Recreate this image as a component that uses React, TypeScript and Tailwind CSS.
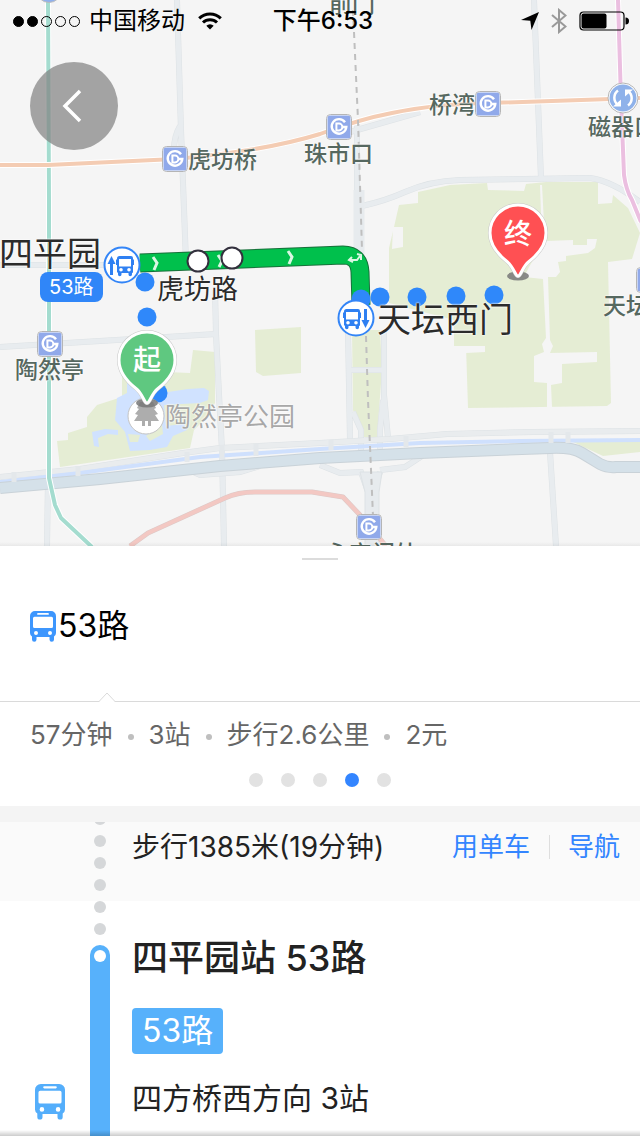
import clsx from "clsx";

const subwayStations = [
  { x: 175, y: 159 },
  { x: 339, y: 127 },
  { x: 488, y: 104 },
  { x: 50, y: 344 },
  { x: 369, y: 527 },
  { x: 649, y: 280 },
];

const walkDots = [
  [145, 282],
  [147, 317],
  [158, 393],
  [361, 299],
  [380, 297],
  [417, 297],
  [456, 296],
  [494, 295],
];

const stationLabels = [
  { name: "前门", place: "left-[329px] -top-[8px]" },
  { name: "桥湾", place: "left-[429px] top-[93px]" },
  { name: "磁器口", place: "left-[588px] top-[115px]" },
  { name: "珠市口", place: "left-[304px] top-[142px]" },
  { name: "虎坊桥", place: "left-[188px] top-[148px]" },
  { name: "天坛东门", place: "left-[603px] top-[294px]" },
  { name: "陶然亭", place: "left-[15px] top-[358px]" },
  { name: "永定门外", place: "left-[326px] top-[542px]" },
];

const summary = ["57分钟", "3站", "步行2.6公里", "2元"];

const pages = [0, 1, 2, 3, 4];

function BusIcon({ className }: { className?: string }) {
  return (
    <svg viewBox="0 0 26 31" className={className} fill="currentColor">
      <path
        fillRule="evenodd"
        d="M5 0h16a5 5 0 0 1 5 5v17a4 4 0 0 1-2 3.500v3a2 2 0 0 1-4.500 0v-2.500h-13v2.500a2 2 0 0 1-4.500 0v-3A4 4 0 0 1 0 22V5a5 5 0 0 1 5-5ZM8 2a.9.9 0 0 0 0 1.800h10a.9.9 0 0 0 0-1.800ZM4.500 5.800A1.500 1.500 0 0 0 3 7.300v8.200A1.500 1.500 0 0 0 4.500 17h17a1.500 1.500 0 0 0 1.500-1.500V7.300a1.500 1.500 0 0 0-1.500-1.500ZM6 20a2 2 0 1 0 0 4 2 2 0 1 0 0-4ZM20 20a2 2 0 1 0 0 4 2 2 0 1 0 0-4Z"
      />
    </svg>
  );
}

function SubwayMark({ x, y }: { x: number; y: number }) {
  return (
    <g transform={`translate(${x} ${y})`}>
      <rect x="-12.500" y="-12.500" width="25" height="25" rx="4" fill="#fff" stroke="#b5b5b5" />
      <rect x="-11.500" y="-11.500" width="23" height="23" rx="2.500" fill="#90a9ea" />
      <g fill="none" stroke="#fff" strokeWidth="2.400">
        <path d="M6-4.800A7.300 7.300 0 1 0 7.300 0H3" />
        <path d="M-2.600-3.400H0a3.400 3.400 0 0 1 0 6.800h-2.600Z" strokeWidth="2" />
      </g>
    </g>
  );
}

function Pin({ x, y, color }: { x: number; y: number; color: string }) {
  return (
    <g transform={`translate(${x} ${y})`}>
      <ellipse cx="0" cy="43" rx="11" ry="4.500" fill="#777" fillOpacity=".85" />
      <path
        d="M0 43C-3 43-4 34-11 28.500C-18 23-28 14-28 0A28 28 0 0 1 28 0C28 14 18 23 11 28.500C4 34 3 43 0 43Z"
        fill={color}
        stroke="#c8c8c8"
        strokeWidth="4"
      />
      <path
        d="M0 43C-3 43-4 34-11 28.500C-18 23-28 14-28 0A28 28 0 0 1 28 0C28 14 18 23 11 28.500C4 34 3 43 0 43Z"
        fill={color}
        stroke="#fff"
        strokeWidth="3"
      />
    </g>
  );
}

function StopMark({ x, y, boarding }: { x: number; y: number; boarding: boolean }) {
  return (
    <g transform={`translate(${x} ${y})`}>
      <circle r="17.500" fill="#fff" stroke="#3385f7" strokeWidth="2" />
      <g transform={boarding ? "translate(-5 -9)" : "translate(-12 -9)"} fill="#2f80f2">
        <path
          fillRule="evenodd"
          d="M2.500 0h11.500A2 2 0 0 1 16 2V3.500h1V9h-1V16.500L15 17v1.500a1 1 0 0 1-3.500 0V17h-7v1.500a1 1 0 0 1-3.500 0V17L0 16V9h-1V3.500h1V2.500A2.500 2.500 0 0 1 2.500 0ZM2 3V10.500h12V3ZM4 12a1.800 1.800 0 1 0 0 3.600 1.800 1.800 0 1 0 0-3.600ZM12 12a1.800 1.800 0 1 0 0 3.600 1.800 1.800 0 1 0 0-3.600Z"
        />
      </g>
      <path
        d={boarding ? "M-10.500-9l4 8h-2.500V10h-3V-1h-2.500Z" : "M9.500 10l-4-8h2.500V-9h3V2h2.500Z"}
        fill="#2f80f2"
      />
    </g>
  );
}

function MapCanvas() {
  return (
    <svg viewBox="0 0 640 546" preserveAspectRatio="xMinYMin slice" className="h-full w-full">
      <rect width="640" height="546" fill="#f5f5f5" />

      {/* parks */}
      <g fill="#e5edd4">
        <path d="M418 192L450 185L487 183L488 190L524 191L526 184L546 182H598V204L612 203L613 195L628 208L640 233L632 259L608 262L611 403L607 406L468 408L466 346H454V320L389 303V248L394 227L399 205L418 203Z" />
        <path d="M255 330L301 327V373L263 376L256 372Z" />
        <path d="M193 350L215 352V403L206 418L194 430L190 448L60 467L57 441L68 440V433L87 427V417L97 405L122 397V370L190 373Z" />
        <path d="M352 330H380L382 370L377 437H363L353 410Z" />
        <path d="M573 442H640V452L603 456Z" />
      </g>
      <g fill="#f5f5f5">
        <path d="M393 227H403V247L392 249Z" />
        <path d="M453 346H485V352L466 353V360H453Z" />
        <path d="M546 241L573 240V245H587V239H597L595 248L588 253L566 256V261L558 262L560 272L556 277H548L550 340L553 346L550 353L597 352V362L562 364V383L551 385L552 407H547V383L534 382V356L544 352L542 344L546 338L543 279L524 277L529 267L535 257Z" />
        <path d="M540 185L542 242L545 242L542 185Z" />
      </g>

      {/* lake */}
      <path
        fill="#d0e2ff"
        d="M127 380L127 393L117 398L115 420L125 432L130 451L150 450L167 447L173 436L187 430L184 424L166 426L164 405L200 403L208 400L209 391L204 388L188 389L168 392L150 388ZM92 432L105 429L118 430V435L108 434L98 438L99 447L94 446Z"
      />
      <path fill="#e5edd4" d="M128 434L140 435L138 442H130ZM146 436L162 424L163 434L150 441Z" />

      {/* roads */}
      <g fill="none" stroke="#dde2e5" strokeWidth="6" strokeLinejoin="round">
        <path d="M177 0L181 130L186 262M180 126Q174 136 174 150" />
        <path d="M215 290L216 334L219 395L222 450L224 546M0 347L216 334M0 265H110" />
        <path d="M534 0L541 178M550 452L556 546M48 480L47 546" />
        <path d="M362 206Q385 201 405 192Q430 181 460 180L590 178Q612 181 640 202" />
        <path d="M357 120V200L360 290M350 132L420 112" />
      </g>
      <g fill="none" stroke="#e8ecef" strokeWidth="5" strokeLinejoin="round">
        <path d="M177 0L181 130L186 262M180 126Q174 136 174 150" />
        <path d="M215 290L216 334L219 395L222 450L224 546M0 347L216 334M0 265H110" />
        <path d="M534 0L541 178M550 452L556 546M48 480L47 546" />
        <path d="M362 206Q385 201 405 192Q430 181 460 180L590 178Q612 181 640 202" />
        <path d="M357 120V200L360 290M350 132L420 112" />
      </g>
      <path d="M359 190V300" stroke="#e7ebee" strokeWidth="11" />

      {/* junction south of the temple */}
      <g fill="none" stroke="#dde2e5" strokeWidth="6">
        <path d="M348 330L350 440M384 330V395L388 438M348 370H384M353 412L361 430V460M383 400L380 430V460" />
        <path d="M320 465L340 473L361 472L371 500M380 472L371 500M380 470L405 467L422 456M185 468L200 475L240 472L260 466" />
      </g>
      <g fill="none" stroke="#e8ecef" strokeWidth="5">
        <path d="M348 330L350 440M384 330V395L388 438M348 370H384M353 412L361 430V460M383 400L380 430V460" />
        <path d="M320 465L340 473L361 472L371 500M380 472L371 500M380 470L405 467L422 456M185 468L200 475L240 472L260 466" />
      </g>
      <path d="M360 472H382L379 492V546H365V492Z" fill="#e7ebee" stroke="#dde2e5" />

      {/* moat with the ring road on both sides */}
      <g fill="none" strokeLinejoin="round">
        <path d="M0 477L80 469L183 453L220 448L320 443L390 439L447 434L533 432L640 431" stroke="#dde2e5" strokeWidth="6" />
        <path d="M0 477L80 469L183 453L220 448L320 443L390 439L447 434L533 432L640 431" stroke="#e9ecee" strokeWidth="5" />
        <path d="M0 482L80 473L200 457L320 449L420 443L520 441L640 440" stroke="#cfe0fd" strokeWidth="4" />
        <path d="M0 488L100 479L220 466L320 458L420 453L550 448Q572 447 582 453L600 464Q608 468 616 467H640" stroke="#c9d2d8" strokeWidth="12" />
        <path d="M0 488L100 479L220 466L320 458L420 453L550 448Q572 447 582 453L600 464Q608 468 616 467H640" stroke="#d5e1e9" strokeWidth="10" />
        <path d="M14 472V482M78 466V476M187 452V462M222 445V459M256 444V456M331 440V450M406 436V447M551 432V443M568 432V443" stroke="#e4e8eb" strokeWidth="5" />
      </g>

      {/* transit lines */}
      <g fill="none" strokeLinejoin="round">
        <path d="M130 546L148 533L225 498Q238 492 255 492H312L343 497L360 515L386 546" stroke="#dcc9c7" strokeWidth="5" />
        <path d="M130 546L148 533L225 498Q238 492 255 492H312L343 497L360 515L386 546" stroke="#f3c8c3" strokeWidth="4" />
        <path d="M48 0L49 200V478L55 505L61 518L92 547" stroke="#fff" strokeWidth="6" />
        <path d="M48 0L49 200V478L55 505L61 518L92 547" stroke="#a4dccf" strokeWidth="4" />
        <path d="M0 165H48L175 159Q265 151 320 134Q360 119 392 113Q435 104 490 103L640 98" stroke="#fff" strokeWidth="6" />
        <path d="M0 165H48L175 159Q265 151 320 134Q360 119 392 113Q435 104 490 103L640 98" stroke="#f4ccb3" strokeWidth="4" />
        <path d="M618 0L621 100L624 175Q626 190 632 200L641 222" stroke="#fff" strokeWidth="6" />
        <path d="M618 0L621 100L624 175Q626 190 632 200L641 222" stroke="#ebbfe0" strokeWidth="4" />
        <path d="M353 10L358 120L362 250M366 336L368 400L373 516" stroke="#bfbfbf" strokeWidth="2" strokeDasharray="6 5" />
      </g>
      {subwayStations.map((s) => (
        <SubwayMark key={s.x} x={s.x} y={s.y} />
      ))}
      <circle cx="49" cy="-10" r="12.500" fill="#8fb0ee" stroke="#bbb" />
      <circle cx="623" cy="98" r="15" fill="#fff" stroke="#b5b5b5" />
      <circle cx="623" cy="98" r="13.500" fill="#8fb2ea" />
      <g fill="none" stroke="#fff" strokeWidth="2.500">
        <path d="M618 90.500A9 9 0 0 0 618 105" />
        <path d="M628 105.500A9 9 0 0 0 628 91" />
      </g>
      <path d="M613 106.500h8v-7zM633 89.500h-8v7z" fill="#fff" />

      {/* bus route */}
      <g fill="none">
        <path d="M140 263L343 255Q359 255 360 272L361 305" stroke="#17703a" strokeWidth="19" />
        <path d="M140 263L343 255Q359 255 360 272L361 305" stroke="#00c04c" strokeWidth="17" />
        <path d="M153 257l4 6-3 7M288 251l4 6-3 7M218 255l4 6-3 6" stroke="#d9f7e3" strokeWidth="3" />
        <path d="M350 260h7l3-4M352 257l-3 3 4 2M357 254l4 1v5" stroke="#d9f7e3" strokeWidth="2" />
      </g>
      {walkDots.map(([x, y]) => (
        <circle key={`${x}-${y}`} cx={x} cy={y} r="9.500" fill="#2f88fa" />
      ))}
      <circle cx="198" cy="261" r="10.500" fill="#fff" stroke="#33303d" strokeWidth="2" />
      <circle cx="232" cy="258" r="10.500" fill="#fff" stroke="#33303d" strokeWidth="2" />
      <StopMark x={122} y={265} boarding />
      <StopMark x={356} y={318} boarding={false} />

      {/* park marker */}
      <circle cx="146" cy="416" r="18" fill="#fff" stroke="#c4c4c4" />
      <path
        d="M140 402h13l3 6-2 1 4 5-3 1 4 6h-8v5h-3v-5h-3v5h-3v-5h-8l4-6-3-1 4-5-2-1Z"
        fill="#adadad"
      />
      <Pin x={147} y={360} color="#5fc880" />
      <Pin x={518} y={233} color="#ff5053" />
    </svg>
  );
}

function StatusBar() {
  return (
    <header className="absolute inset-x-0 top-0 flex h-[42px] items-center pr-[11px] pl-[13px] text-2xl text-black">
      <div className="flex flex-1 items-center">
        <div className="flex gap-[3px]">
          {pages.map((n) => (
            <span
              key={n}
              className={clsx("size-[11px] rounded-full border border-black", n < 2 && "bg-black")}
            />
          ))}
        </div>
        <span className="ml-[9px]">中国移动</span>
        <svg viewBox="0 0 24 18" className="ml-[13px] w-6" fill="none" stroke="#000" strokeWidth="3">
          <path d="M1.200 6.400A15.500 15.500 0 0 1 22.800 6.400M5 10.500A10 10 0 0 1 19 10.500" />
          <path d="M12 17.500L8.300 13.800A5.300 5.300 0 0 1 15.700 13.800Z" fill="#000" stroke="none" />
        </svg>
      </div>
      <time className="ml-1 font-medium">下午6:53</time>
      <div className="flex flex-1 items-center justify-end">
        <svg viewBox="0 0 18 18" className="w-[18px]">
          <path d="M18 0L10.500 18L9.300 8.700L0 8Z" />
        </svg>
        <svg viewBox="0 0 16 26" className="ml-3 w-4" fill="none" stroke="#999" strokeWidth="2">
          <path d="M1 7L14.500 18.500L8 24V2L14.500 7.500L1 19" />
        </svg>
        <svg viewBox="0 0 50 20" className="ml-3 w-[50px]">
          <rect x="1" y="1" width="44" height="18" rx="3.500" fill="none" stroke="#000" strokeWidth="1.200" />
          <rect x="2.500" y="2.500" width="25" height="15" rx="2" />
          <path d="M46.500 6.500a3.500 3.500 0 0 1 0 7Z" />
        </svg>
      </div>
    </header>
  );
}

function RouteMap() {
  return (
    <section className="relative min-h-0 flex-1 overflow-hidden bg-[#f5f5f5]">
      <MapCanvas />

      {stationLabels.map((label) => (
        <span
          key={label.name}
          className={clsx(
            "absolute text-[23px] leading-6 font-medium whitespace-nowrap text-[#566860] [text-shadow:0_0_2px_#fff,0_0_2px_#fff]",
            label.place
          )}
        >
          {label.name}
        </span>
      ))}
      <span className="absolute top-[403px] left-[165px] text-[26px] leading-7 text-[#a8a8a8] [text-shadow:0_0_2px_#fff,0_0_2px_#fff]">
        陶然亭公园
      </span>
      <span className="absolute top-[276px] left-[157px] text-[27px] leading-7 text-[#2b2b2b] [text-shadow:0_0_2px_#fff,0_0_2px_#fff]">
        虎坊路
      </span>
      <span className="absolute top-[236px] -left-[1px] text-[34px] leading-9 text-[#2b2b2b] [text-shadow:0_0_2px_#fff,0_0_2px_#fff]">
        四平园
      </span>
      <span className="absolute top-[302px] left-[377px] text-[34px] leading-9 text-[#2b2b2b] [text-shadow:0_0_2px_#fff,0_0_2px_#fff]">
        天坛西门
      </span>
      <span className="absolute top-[272px] left-[40px] rounded-lg bg-[#3086f8] px-[9px] text-[20px] leading-[30px] text-white">
        53路
      </span>
      <span className="absolute top-[346px] left-[133px] text-[28px] leading-7 font-medium text-white">起</span>
      <span className="absolute top-[220px] left-[504px] text-[28px] leading-7 font-medium text-white">终</span>

      <StatusBar />
      <button
        aria-label="返回"
        className="absolute top-[62px] left-[30px] flex size-[88px] items-center justify-center rounded-full bg-[#808080]/70 pr-1 text-white"
      >
        <svg viewBox="0 0 20 34" className="h-[34px] w-5" fill="none" stroke="currentColor" strokeWidth="3.500">
          <path d="M18 2L3 17L18 32" />
        </svg>
      </button>
      <div className="absolute inset-x-0 bottom-0 h-1 bg-linear-to-b from-transparent to-black/5" />
    </section>
  );
}

function PlanCard() {
  return (
    <section className="bg-white pt-3 pb-[19px]">
      <div className="mx-auto h-[2px] w-9 bg-[#dcdcdc]" />
      <h1 className="flex items-center gap-[2px] px-[30px] pt-[46px] pb-[55px] text-[32px] leading-10 text-black">
        <BusIcon className="w-[26px] text-[#3d96fd]" />
        53路
      </h1>
      <div className="relative border-t border-[#dadada]">
        <svg viewBox="0 0 16 11" className="absolute -top-[10px] left-[99px] h-[11px] w-4">
          <path d="M0 10L8 1L16 10V11H0Z" fill="#fff" />
          <path d="M0 9.500L8 1L16 9.500" fill="none" stroke="#dadada" />
        </svg>
      </div>
      <ul className="mt-[17px] flex items-center px-[30px] text-[26px] leading-8 text-[#666]">
        {summary.map((item, i) => (
          <li key={item} className="flex items-center">
            {i > 0 && <span className="mx-[15px] mt-1 size-[6px] rounded-full bg-[#bfbfbf]" />}
            {item}
          </li>
        ))}
      </ul>
      <div className="mt-[22px] flex justify-center gap-[18px]">
        {pages.map((n) => (
          <span
            key={n}
            className={clsx("size-[14px] rounded-full", n === 3 ? "bg-[#3385ff]" : "bg-[#e2e2e2]")}
          />
        ))}
      </div>
    </section>
  );
}

function WalkStep() {
  return (
    <section className="flex items-start overflow-hidden bg-[#fafafa]">
      <div className="-mt-[9px] ml-[90px] flex w-5 flex-col items-center gap-[10px]">
        {pages.slice(1).map((n) => (
          <span key={n} className="size-3 rounded-full bg-[#d5d7d9]" />
        ))}
      </div>
      <div className="ml-[22px] flex flex-1 items-center pt-[9px] pr-5 pb-[38px] leading-8">
        <p className="flex-1 text-[28px] text-[#222]">步行1385米(19分钟)</p>
        <button className="text-[26px] text-[#3385ff]">用单车</button>
        <span className="mr-[18px] ml-[19px] h-6 w-px bg-[#dedede]" />
        <button className="text-[26px] text-[#3385ff]">导航</button>
      </div>
    </section>
  );
}

function BusStep() {
  return (
    <section className="relative flex bg-white">
      <div className="flex w-[90px] items-end pb-4 pl-[35px] text-[#54aefb]">
        <BusIcon className="w-[30px]" />
      </div>
      <div className="flex w-5 flex-col items-center gap-[10px]">
        <span className="size-3 rounded-full bg-[#d5d7d9]" />
        <span className="size-3 rounded-full bg-[#d5d7d9]" />
        <div className="flex w-full flex-1 justify-center rounded-t-full bg-[#57b1fb] pt-[5px]">
          <span className="size-3 rounded-full bg-white" />
        </div>
      </div>
      <div className="ml-[22px] flex-1 pt-[37px] pb-[18px] text-[#222]">
        <h2 className="text-[36px] leading-10 font-medium">四平园站 53路</h2>
        <p className="mt-[30px] w-fit rounded bg-[#57b1fb] px-[10px] text-[32px] leading-[46px] text-white">
          53路
        </p>
        <p className="mt-6 text-[30px] leading-10">四方桥西方向 3站</p>
      </div>
      <div className="absolute inset-x-0 bottom-0 h-[6px] bg-linear-to-b from-transparent to-black/20" />
    </section>
  );
}

export default function App() {
  return (
    <main className="flex h-screen flex-col overflow-hidden bg-white font-[Inter,'Noto_Sans_CJK_SC',sans-serif]">
      <RouteMap />
      <div className="shrink-0">
        <PlanCard />
        <div className="h-4 bg-[#f4f4f4]" />
        <WalkStep />
        <BusStep />
      </div>
    </main>
  );
}
